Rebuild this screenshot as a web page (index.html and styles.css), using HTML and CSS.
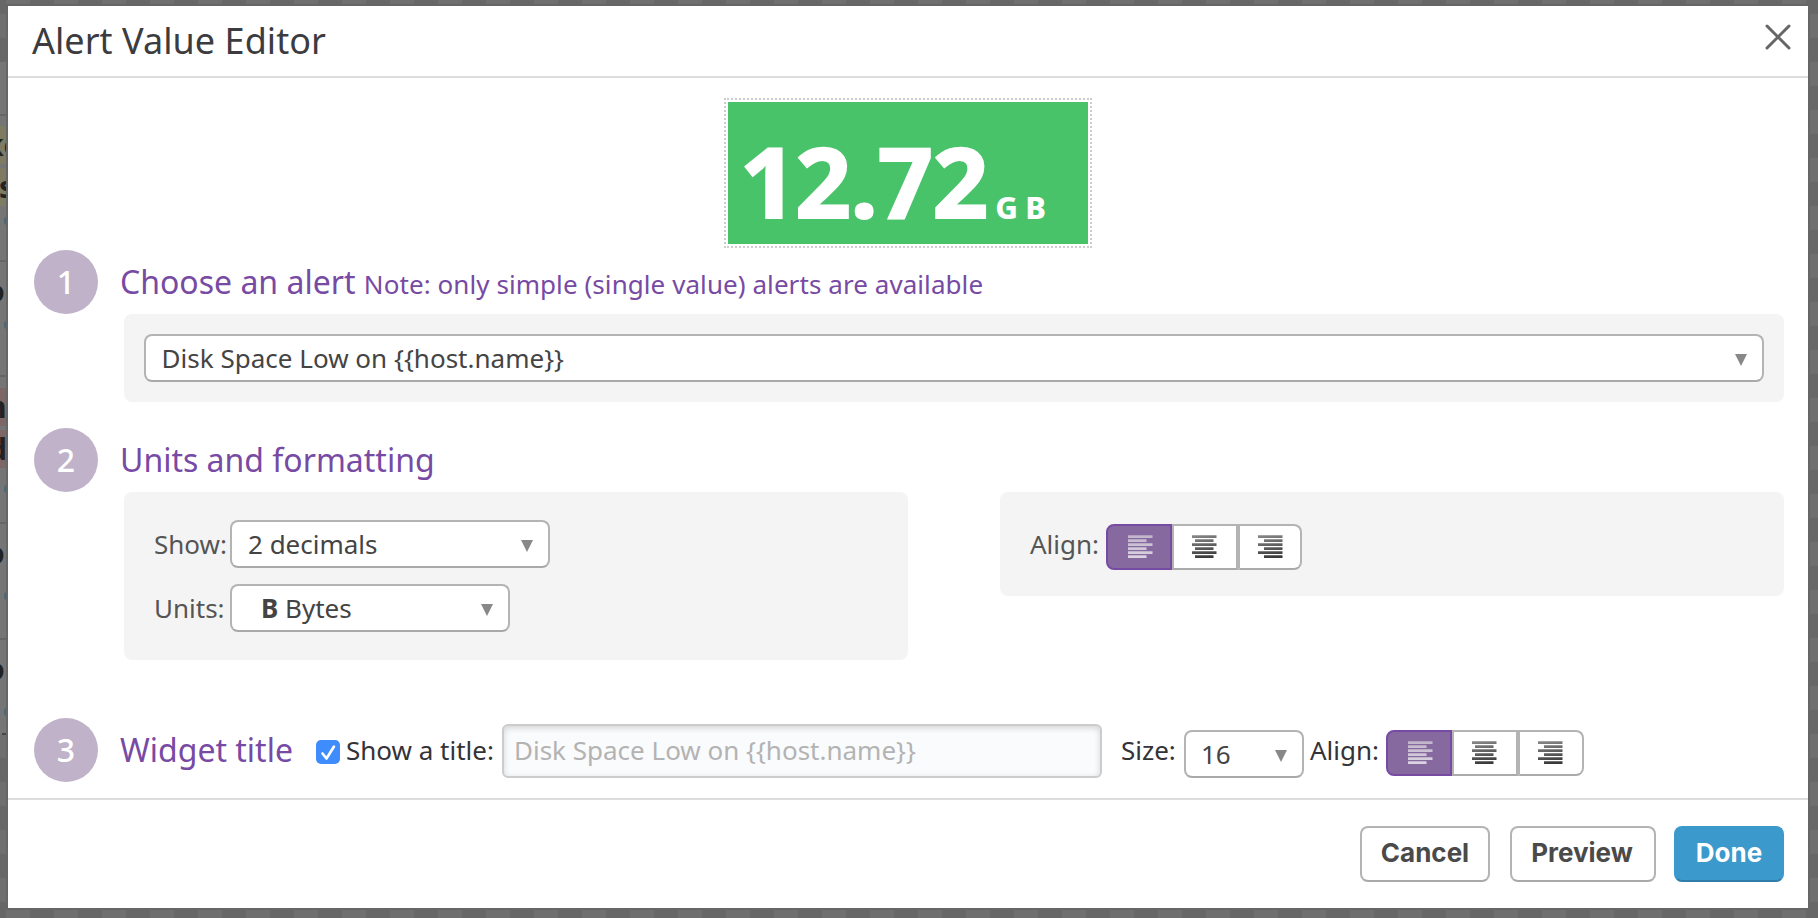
FILE: index.html
```html
<!DOCTYPE html>
<html lang="en">
<head>
<meta charset="utf-8">
<title>Alert Value Editor</title>
<link rel="stylesheet" href="styles.css">
</head>
<body>
<svg class="defs" width="0" height="0" aria-hidden="true">
  <defs>
    <linearGradient id="dark" gradientUnits="userSpaceOnUse" x1="0" y1="0" x2="4" y2="24"><stop offset="0" stop-color="#8a8a8a"/><stop offset="1" stop-color="#3a3a3a"/></linearGradient>
    <linearGradient id="light" gradientUnits="userSpaceOnUse" x1="0" y1="0" x2="0" y2="24"><stop offset="0" stop-color="#c0b4ca"/><stop offset="1" stop-color="#ddd5e3"/></linearGradient>
    <symbol id="al-left" viewBox="0 0 26 24"><path d="M0 .2h24.5v2.7H0zM0 4.2h18.5v2.7H0zM0 8.2h24.5v2.7H0zM0 12.2h18.5v2.7H0zM0 16.2h24.5v2.7H0zM0 20.2h18.5v2.7H0z"/></symbol>
    <symbol id="al-center" viewBox="0 0 26 24"><path d="M0 .2h24.5v2.7H0zM3 4.2h18.5v2.7H3zM0 8.2h24.5v2.7H0zM3 12.2h18.5v2.7H3zM0 16.2h24.5v2.7H0zM3 20.2h18.5v2.7H3z"/></symbol>
    <symbol id="al-right" viewBox="0 0 26 24"><path d="M0 .2h24.5v2.7H0zM6 4.2h18.5v2.7H6zM0 8.2h24.5v2.7H0zM6 12.2h18.5v2.7H6zM0 16.2h24.5v2.7H0zM6 20.2h18.5v2.7H6z"/></symbol>
  </defs>
</svg>
<div class="page-behind" aria-hidden="true">
  <div class="strip">
    <i class="rule r1"></i><i class="rule r2"></i><i class="rule r3"></i><i class="rule r4"></i><i class="rule r5"></i><i class="rule r6"></i>
    <b class="tag yellow t1">ke</b><b class="tag yellow t2">s</b>
    <b class="tag plain t3">o</b>
    <b class="tag red t4">n</b><b class="tag red t5">d</b>
    <b class="tag plain t6">o</b><b class="tag plain t7">o</b>
    <em class="link l1"></em><em class="link l2"></em><em class="link l3"></em><em class="link l4"></em><em class="link l5"></em>
  </div>
</div>
<main class="modal">
  <header class="head">
    <h1>Alert Value Editor</h1>
    <svg class="close" viewBox="0 0 26 26"><path d="M2 2l22 22M24 2L2 24"/></svg>
  </header>
  <div class="content">
    <div class="preview"><div class="value"><span class="num">12.72</span><span class="unit">GB</span></div></div>
    <section class="step first">
      <span class="badge">1</span>
      <h2>Choose an alert <small>Note: only simple (single value) alerts are available</small></h2>
    </section>
    <div class="panel panel-alert">
      <div class="select wide"><span>Disk Space Low on {{host.name}}</span><svg class="caret" viewBox="0 0 12 12"><path d="M0 0h12L6 12z"/></svg></div>
    </div>
    <section class="step second">
      <span class="badge">2</span>
      <h2>Units and formatting</h2>
    </section>
    <div class="columns">
      <div class="panel panel-units">
        <div class="field"><label class="lbl">Show:</label><div class="select s-show"><span>2 decimals</span><svg class="caret" viewBox="0 0 12 12"><path d="M0 0h12L6 12z"/></svg></div></div>
        <div class="field"><label class="lbl">Units:</label><div class="select s-units"><span><b>B</b> Bytes</span><svg class="caret" viewBox="0 0 12 12"><path d="M0 0h12L6 12z"/></svg></div></div>
      </div>
      <div class="panel panel-align">
        <label class="lbl">Align:</label>
        <div class="group">
          <span class="seg on"><svg><use href="#al-left"/></svg></span><span class="seg mid"><svg><use href="#al-center"/></svg></span><span class="seg last"><svg><use href="#al-right"/></svg></span>
        </div>
      </div>
    </div>
    <section class="step third">
      <span class="badge">3</span>
      <h2>Widget title</h2>
      <span class="check"><svg viewBox="0 0 24 24"><path d="M6.5 13.5l4 5 7.5-12"/></svg></span>
      <label class="show-title">Show a title:</label>
      <div class="input">Disk Space Low on {{host.name}}</div>
      <label class="size">Size:</label>
      <div class="select s-size"><span>16</span><svg class="caret" viewBox="0 0 12 12"><path d="M0 0h12L6 12z"/></svg></div>
      <label class="align2">Align:</label>
      <div class="group">
        <span class="seg on"><svg><use href="#al-left"/></svg></span><span class="seg mid"><svg><use href="#al-center"/></svg></span><span class="seg last"><svg><use href="#al-right"/></svg></span>
      </div>
    </section>
  </div>
  <footer class="foot">
    <button class="btn cancel">Cancel</button>
    <button class="btn prev">Preview</button>
    <button class="btn done">Done</button>
  </footer>
</main>
</body>
</html>
```

FILE: styles.css
```css
* { box-sizing: border-box; }
html, body { height: 100%; }
body {
  margin: 0;
  padding: 6px 10px 10px 8px;
  overflow: hidden;
  position: relative;
  font: 26px/36px "Noto Sans", sans-serif;
  color: #333338;
  background: repeating-conic-gradient(#676767 0 25%, #6f6f6f 0 50%) 6px -10px / 48px 48px;
}
.defs { position: absolute; }

/* dimmed dashboard that shows at the modal's left edge */
.page-behind { position: absolute; left: 0; top: 0; width: 1818px; height: 918px; }
.strip { position: absolute; left: 0; top: 62px; width: 6px; height: 673px; background: #757575; overflow: hidden; }
.rule { position: absolute; left: 0; width: 6px; height: 2px; background: #656565; }
.r1 { top: 52px; } .r2 { top: 198px; } .r3 { top: 313px; } .r4 { top: 460px; } .r5 { top: 576px; } .r6 { top: 671px; left: 2px; background: #444; }
.tag { position: absolute; left: 0; width: 6px; height: 38px; font-size: 30px; line-height: 38px; color: #222; overflow: hidden; white-space: nowrap; }
.yellow { background: #7d7b62; } .red { background: #7d6666; }
.t1 { top: 64px; text-indent: -15px; } .t2 { top: 106px; text-indent: -1px; }
.t3 { top: 210px; text-indent: -14px; }
.t4 { top: 326px; text-indent: -13px; } .t5 { top: 368px; text-indent: -12px; }
.t6 { top: 472px; text-indent: -14px; } .t7 { top: 588px; text-indent: -14px; }
.link { position: absolute; left: 4px; width: 6px; height: 8px; border-radius: 4px; background: #456a7d; }
.l1 { top: 155px; } .l2 { top: 259px; } .l3 { top: 423px; } .l4 { top: 530px; } .l5 { top: 646px; }

.modal { position: relative; height: 902px; width: 1800px; background: #fff; box-shadow: 0 0 0 2px #666; display: flex; flex-direction: column; }
.head { height: 72px; flex: none; border-bottom: 2px solid #ddd; display: flex; justify-content: space-between; align-items: flex-start; padding: 0 17px 0 24px; }
h1 { margin: 10px 0 0; font-size: 36px; line-height: 50px; letter-spacing: .04px; font-weight: 400; color: #3c3c40; }
.close { width: 26px; height: 26px; margin-top: 18px; fill: none; stroke: #666; stroke-width: 3; stroke-linecap: round; }

.content { height: 720px; flex: none; padding: 20px 24px 0 26px; }
.preview { width: 368px; height: 150px; margin-left: 690px; border: 2px dotted #ccc; padding: 2px; }
.value { height: 142px; background: #49c36a; color: #fff; font-weight: 800; padding-left: 11px; display: flex; align-items: baseline; line-height: 157px; }
.num { font-size: 100px; letter-spacing: -2.3px; }
.unit { font-size: 31px; letter-spacing: 7.4px; margin-left: 8px; }

.step { display: flex; height: 64px; margin-top: 2px; align-items: center; }
.second { margin-top: 26px; }
.third { margin-top: 58px; align-items: flex-start; }
.badge { flex: none; width: 64px; height: 64px; border-radius: 50%; background: #bfb2c9; color: #fff; font-size: 32px; line-height: 64px; text-align: center; font-weight: 500; }
h2 { margin: 0 0 0 22px; font-size: 32px; line-height: 64px; font-weight: 400; color: #774aa4; white-space: nowrap; }
.first h2 { margin-top: 2px; }
h2 small { font-size: 26px; letter-spacing: .07px; }

.panel { background: #f4f4f4; border-radius: 8px; }
.panel-alert { margin-left: 90px; height: 88px; padding: 20px; }
.select { height: 48px; background: #fff; border: 2px solid #b4b4b4; border-bottom-color: #a9a9a9; border-radius: 8px; display: flex; justify-content: space-between; align-items: center; padding: 0 15px 0 16px; color: #444; line-height: 44px; white-space: nowrap; }
.wide { padding-left: 15.5px; }
.wide span { letter-spacing: .02px; }
.caret { width: 12px; height: 12px; margin-top: 4px; fill: #888; }
.columns { margin-left: 90px; display: flex; gap: 92px; align-items: flex-start; }
.panel-units { width: 784px; height: 168px; padding: 28px 30px; }
.field { display: flex; height: 48px; align-items: center; margin-bottom: 16px; }
.lbl { width: 76px; color: #555; }
.s-show { width: 320px; }
.s-units { width: 280px; padding-left: 29px; }
.panel-align { width: 784px; height: 104px; padding: 32px 30px 0; display: flex; }
.panel-align .lbl { margin-top: 2px; }

.group { display: flex; height: 46px; }
.seg { width: 66px; height: 46px; background: #fff; border: 2px solid #b4b4b4; border-bottom-color: #aaa; padding: 9px 0 0 18px; }
.seg svg { display: block; width: 26px; height: 24px; fill: url(#dark); }
.on { background: #866a9f; border-color: #774aa4; border-radius: 8px 0 0 8px; padding-left: 20px; }
.on svg { fill: url(#light); }
.last { width: 64px; border-radius: 0 8px 8px 0; }
.third .group .last { width: 66px; }

.check { width: 24px; height: 24px; margin: 22px 0 0 23px; border-radius: 5px; background: #3f8cfd; }
.check svg { display: block; width: 24px; height: 24px; fill: none; stroke: #fff; stroke-width: 2.6; stroke-linecap: round; stroke-linejoin: round; }
.third label { margin-top: 14px; white-space: nowrap; }
.show-title { width: 156px; margin-left: 6px; }
.input { width: 600px; height: 54px; margin-top: 6px; border: 2px solid #ccc; border-radius: 6px; background: #fafbfd; box-shadow: inset 0 2px 6px rgba(0,0,0,.16); padding-left: 10px; line-height: 48px; color: #b3b3b3; white-space: nowrap; }
.size { width: 63px; margin-left: 19px; }
.s-size { width: 120px; margin-top: 12px; padding-left: 15px; }
.align2 { width: 76px; margin-left: 6px; }
.third .group { margin-top: 12px; }

.foot { flex: 1; border-top: 2px solid #ddd; padding: 26px 24px 0; display: flex; justify-content: flex-end; }
.btn { height: 56px; padding: 0 0 2px; border: 2px solid #b4b4b4; border-bottom-color: #a9a9a9; border-radius: 8px; background: #fff; color: #4a4a4a; font: 700 26px/50px "Inter", sans-serif; }
.cancel { width: 130px; }
.prev { width: 146px; margin-left: 20px; padding-right: 2px; }
.done { width: 110px; margin-left: 18px; background: #3b99cc; border-color: #3b99cc; border-bottom-color: #2f7da9; color: #fff; }
```
